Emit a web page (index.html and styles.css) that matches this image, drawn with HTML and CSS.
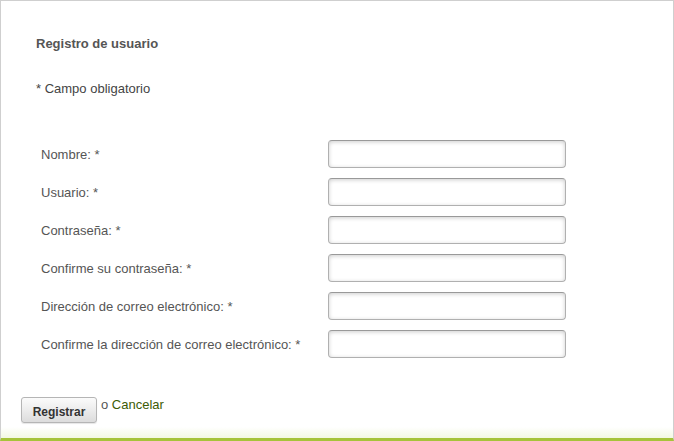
FILE: index.html
```html
<!DOCTYPE html>
<html lang="es">
<head>
<meta charset="utf-8">
<title>Registro de usuario</title>
<link rel="stylesheet" href="styles.css">
</head>
<body>
<div class="panel">
  <div class="head">
    <h1 class="title">Registro de usuario</h1>
    <p class="note">* Campo obligatorio</p>
  </div>
  <form class="form">
    <div class="rows">
      <label class="row"><span class="lbl">Nombre: *</span><input class="field" type="text"></label>
      <label class="row"><span class="lbl">Usuario: *</span><input class="field" type="text"></label>
      <label class="row"><span class="lbl">Contraseña: *</span><input class="field" type="password"></label>
      <label class="row"><span class="lbl">Confirme su contraseña: *</span><input class="field" type="password"></label>
      <label class="row"><span class="lbl">Dirección de correo electrónico: *</span><input class="field" type="text"></label>
      <label class="row"><span class="lbl">Confirme la dirección de correo electrónico: *</span><input class="field" type="text"></label>
    </div>
    <div class="actions">
      <button class="btn" type="button">Registrar</button>
      <span class="or">o <a class="cancel" href="#">Cancelar</a></span>
    </div>
  </form>
</div>
</body>
</html>
```
FILE: styles.css
```css
html, body {
  margin: 0;
  padding: 0;
  background: #fff;
}
body {
  font-family: "Liberation Sans", Arial, sans-serif;
  font-size: 13px;
  color: #555;
}
.panel {
  box-sizing: border-box;
  width: 674px;
  height: 441px;
  border: 1px solid #cfcfcf;
  border-bottom: 3px solid #a6c33a;
  padding: 35px 0 0 20px;
  background: linear-gradient(to bottom, #fff 0, #fff 426px, #f3f8e2 437px);
}
.head {
  padding-left: 15px;
}
.title {
  margin: 0;
  font-size: 13px;
  line-height: 16px;
  font-weight: bold;
  color: #555;
}
.note {
  margin: 28px 0 0;
  line-height: 17px;
  color: #444;
}
.form {
  margin: 0;
}
.rows {
  margin-top: 43px;
  padding-left: 20px;
  display: flex;
  flex-direction: column;
  gap: 10px;
}
.row {
  display: flex;
  align-items: center;
  height: 28px;
}
.lbl {
  width: 287px;
  flex: none;
  color: #555;
}
.field {
  box-sizing: border-box;
  width: 238px;
  height: 28px;
  margin: 0;
  border: 1px solid #b0b0b0;
  border-top-color: #999;
  border-radius: 4px;
  background: #fff;
  box-shadow: inset 0 1px 4px rgba(0,0,0,0.2);
}
.actions {
  margin-top: 39px;
  display: flex;
  align-items: flex-start;
  gap: 4px;
}
.btn {
  box-sizing: border-box;
  width: 76px;
  height: 26px;
  margin: 0;
  padding: 3px 0 0;
  border: 1px solid #b5b5b5;
  border-radius: 3px;
  background: linear-gradient(to bottom, #fbfbfb 0%, #ececec 50%, #dcdcdc 100%);
  box-shadow: 0 1px 1px rgba(0,0,0,0.1);
  font-family: "Liberation Sans", Arial, sans-serif;
  font-size: 12px;
  font-weight: bold;
  color: #333;
}
.or {
  line-height: 16px;
  margin-top: 0;
  color: #555;
}
.cancel {
  color: #3d5c05;
  text-decoration: none;
}
```
